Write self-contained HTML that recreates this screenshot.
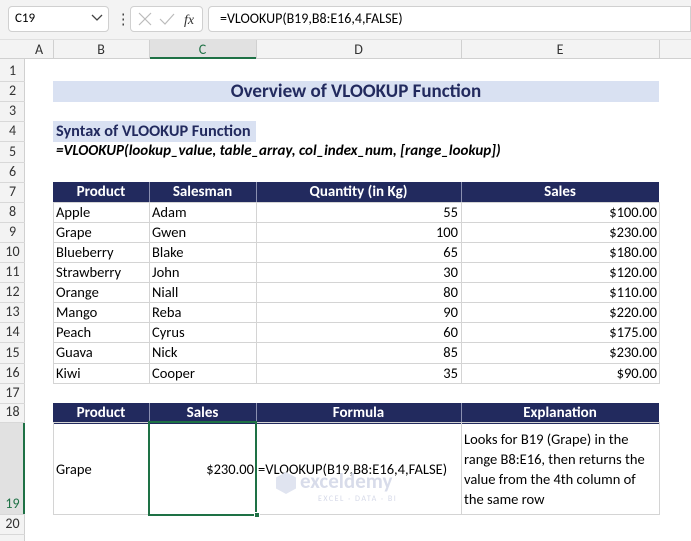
<!DOCTYPE html>
<html><head><meta charset="utf-8"><style>
body{margin:0;width:691px;height:541px;background:#fff;font-family:Calibri,Carlito,"Liberation Sans",sans-serif;font-size:14.5px;color:#000;position:relative;overflow:hidden}
.a{position:absolute;box-sizing:border-box}
.t{position:absolute;white-space:nowrap;line-height:20px}
</style></head><body>
<div class="a" style="left:0;top:0;width:691px;height:40px;background:#f3f3f3;border-bottom:1px solid #e0e0e0"></div>
<div class="a" style="left:8px;top:6px;width:101px;height:26px;background:#fff;border:1px solid #d0d0d0;border-radius:4px"></div>
<div class="t" style="left:15px;top:9px;font-size:13px">C19</div>
<svg class="a" style="left:91px;top:14px" width="12" height="8"><path d="M1 1l5 5 5-5" stroke="#444" fill="none" stroke-width="1.3"/></svg>
<div class="t" style="left:116px;top:9px;color:#444">⋮</div>
<div class="a" style="left:130px;top:6px;width:73px;height:26px;background:#fff;border:1px solid #d0d0d0;border-radius:4px"></div>
<svg class="a" style="left:138px;top:12px" width="60" height="15"><path d="M1 1l12 12M13 1L1 13" stroke="#bbb" stroke-width="1.2"/><path d="M22 7l5 5 9-10" stroke="#bbb" fill="none" stroke-width="1.2"/><text x="46" y="12" font-family="Liberation Serif" font-style="italic" font-size="14" fill="#333">fx</text></svg>
<div class="a" style="left:208px;top:6px;width:483px;height:26px;background:#fff;border:1px solid #d0d0d0;border-radius:4px 0 0 4px"></div>
<div class="t" style="left:220px;top:9px;font-size:14px">=VLOOKUP(B19,B8:E16,4,FALSE)</div>
<div class="a" style="left:0;top:40px;width:691px;height:19px;background:#f3f3f3;border-bottom:1px solid #d0d0d0"></div>
<div class="a" style="left:149px;top:40px;width:107px;height:19px;background:#e1e1e1;border-bottom:2px solid #1e7145"></div>
<div class="a" style="left:0;top:59px;width:25px;height:482px;background:#f3f3f3;border-right:1px solid #d0d0d0"></div>
<div class="a" style="left:0;top:422px;width:25px;height:92px;background:#e1e1e1;border-right:2px solid #1e7145"></div>
<div id="g"></div>
<script>
(function(){
var h='';
var cols=[['A',25,53],['B',53,149],['C',149,256],['D',256,461],['E',461,659]];
cols.forEach(function(c){h+='<div class="a" style="left:'+c[2]+'px;top:40px;width:1px;height:19px;background:#d0d0d0"></div><div class="t" style="left:'+c[1]+'px;width:'+(c[2]-c[1])+'px;text-align:center;top:40px;line-height:19px;font-size:14px;color:'+(c[0]=='C'?'#1e7145':'#333')+'">'+c[0]+'</div>';});
function rt(n){if(n<=19)return Math.round(61+20.1*(n-1));return 514;}
function rb(n){if(n==19)return 514;if(n==20)return 534;if(n==18)return 422;return rt(n+1);}
for(var n=1;n<=20;n++){h+='<div class="t" style="left:0;width:25px;text-align:center;font-size:14px;top:'+(rb(n)-20)+'px;color:'+(n==19?'#1e7145':'#333')+'">'+n+'</div><div class="a" style="left:0;top:'+rb(n)+'px;width:25px;height:1px;background:#d8d8d8"></div>';}
h+='<div class="a" style="left:53px;top:'+rt(2)+'px;width:606px;height:21px;background:#d9e1f2"></div><div class="t" style="left:53px;width:606px;text-align:center;top:'+rt(2)+'px;font-weight:bold;font-size:19px;line-height:21px;color:#222a5e">Overview of VLOOKUP Function</div>';
h+='<div class="a" style="left:53px;top:'+rt(4)+'px;width:203px;height:21px;background:#d9e1f2"></div><div class="t" style="left:56px;top:'+rt(4)+'px;font-weight:bold;font-size:16.3px;color:#222a5e">Syntax of VLOOKUP Function</div>';
h+='<div class="t" style="left:56px;top:'+rt(5)+'px;font-weight:bold;font-style:italic;font-size:15px">=VLOOKUP(lookup_value, table_array, col_index_num, [range_lookup])</div>';
var x=[53,149,256,461,659];
function hdr(n,labels){var t=rt(n);h+='<div class="a" style="left:53px;top:'+t+'px;width:606px;height:21px;background:#222a5e"></div>';for(var i=0;i<4;i++){h+='<div class="t" style="left:'+x[i]+'px;width:'+(x[i+1]-x[i])+'px;text-align:center;top:'+t+'px;color:#fff;font-weight:bold;font-size:15px">'+labels[i]+'</div>';if(i>0)h+='<div class="a" style="left:'+x[i]+'px;top:'+t+'px;width:1px;height:21px;background:#8a8fb0"></div>';}}
hdr(7,['Product','Salesman','Quantity (in Kg)','Sales']);
var d=[['Apple','Adam',55,'$100.00'],['Grape','Gwen',100,'$230.00'],['Blueberry','Blake',65,'$180.00'],['Strawberry','John',30,'$120.00'],['Orange','Niall',80,'$110.00'],['Mango','Reba',90,'$220.00'],['Peach','Cyrus',60,'$175.00'],['Guava','Nick',85,'$230.00'],['Kiwi','Cooper',35,'$90.00']];
d.forEach(function(r,k){var n=8+k,t=rt(n);h+='<div class="a" style="left:53px;top:'+t+'px;width:607px;height:'+(rb(n)-t+1)+'px;border:1px solid #d4d4d4"></div>';for(var i=1;i<4;i++)h+='<div class="a" style="left:'+x[i]+'px;top:'+t+'px;width:1px;height:'+(rb(n)-t)+'px;background:#d4d4d4"></div>';
h+='<div class="t" style="left:56px;top:'+t+'px">'+r[0]+'</div><div class="t" style="left:152px;top:'+t+'px">'+r[1]+'</div><div class="t" style="left:256px;width:202px;text-align:right;top:'+t+'px">'+r[2]+'</div><div class="t" style="left:461px;width:196px;text-align:right;top:'+t+'px">'+r[3]+'</div>';});
hdr(18,['Product','Sales','Formula','Explanation']);
h+='<div class="a" style="left:53px;top:422px;width:607px;height:93px;border:1px solid #d4d4d4"></div>';
for(var i=1;i<4;i++)h+='<div class="a" style="left:'+x[i]+'px;top:422px;width:1px;height:92px;background:#d4d4d4"></div>';
h+='<div class="t" style="left:56px;top:459px">Grape</div><div class="t" style="left:149px;width:105px;text-align:right;top:459px">$230.00</div><div class="t" style="left:258px;top:459px">=VLOOKUP(B19,B8:E16,4,FALSE)</div>';
h+='<div class="a" style="left:464px;top:429px;width:192px;line-height:20px;white-space:normal">Looks for B19 (Grape) in the range B8:E16, then returns the value from the 4th column of the same row</div>';
h+='<div class="a" style="left:148px;top:421px;width:109px;height:95px;border:2px solid #1e7145"></div><div class="a" style="left:254px;top:512px;width:6px;height:6px;background:#1e7145;border:1px solid #fff"></div>';
h+='<div class="t" style="left:300px;top:470px;font-size:21px;color:#d8dcea;font-weight:bold;line-height:22px">exceldemy</div><div class="t" style="left:318px;top:494px;font-size:8px;color:#d5d9e8;letter-spacing:1.5px;line-height:10px">EXCEL · DATA · BI</div><div class="a" style="left:276px;top:472px;width:20px;height:22px;background:#e0e4f0;clip-path:polygon(50% 0,100% 25%,100% 75%,50% 100%,0 75%,0 25%)"></div>';
document.getElementById('g').innerHTML=h;
})();
</script>
</body></html>
